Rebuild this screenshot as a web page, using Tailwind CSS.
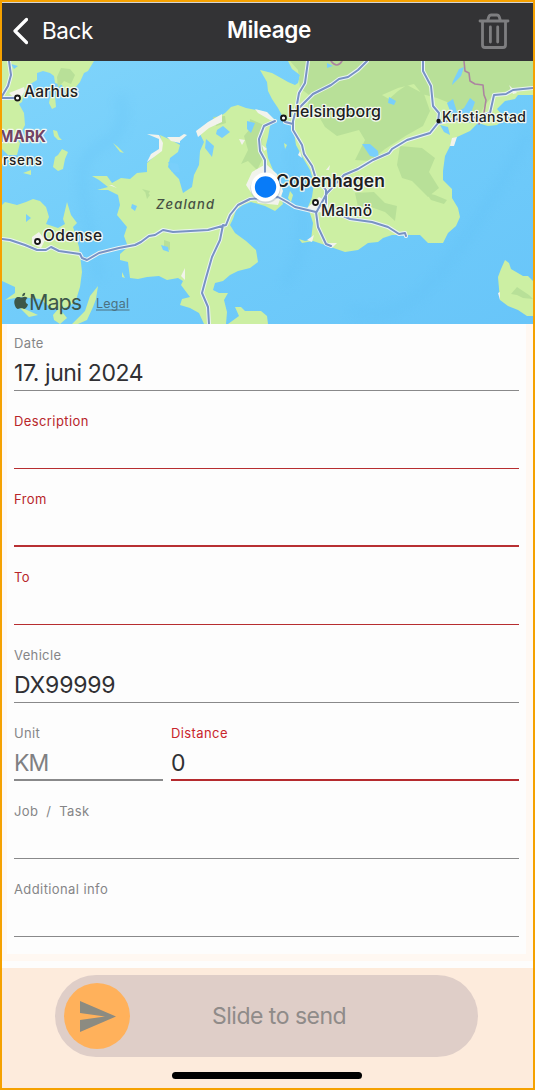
<!DOCTYPE html>
<html lang="da">
<head>
<meta charset="utf-8">
<meta name="viewport" content="width=device-width">
<title>Mileage</title>
<script src="https://cdn.jsdelivr.net/npm/@tailwindcss/browser@4"></script>
</head>
<body class="font-['Inter',sans-serif]">
<main class="flex h-[1090px] w-[535px] flex-col overflow-hidden border-2 border-[#f5a100] bg-[#fdfdfd]">
  <header class="grid h-[59px] shrink-0 grid-cols-3 items-center border-t border-[#d5d5d5] bg-[#333335] pr-[23px] pb-[3px] pl-2.5 text-white">
    <button class="flex items-center gap-3.5 text-left">
      <svg class="h-7 w-4 shrink-0" viewBox="0 0 16 28" fill="none" stroke="currentColor" stroke-width="3.2" stroke-linecap="round" stroke-linejoin="round"><path d="M14.500 2.500 3 14l11.500 11.500"/></svg>
      <span class="text-[22.500px] leading-7 tracking-[-0.4px]">Back</span>
    </button>
    <h1 class="pb-0.5 pl-4 text-center text-[22.500px] leading-7 font-semibold tracking-[-0.35px]">Mileage</h1>
    <svg class="h-9 w-8 justify-self-end text-[#7e7e80]" viewBox="0 0 32 36" fill="none" stroke="currentColor" stroke-width="2.8" stroke-linecap="round" stroke-linejoin="round"><path d="M2 8h28M4.500 8v24q0 2.500 2.500 2.500h18q2.500 0 2.500-2.500V8M9.500 8l1.200-4q.7-2 2.500-2h5.600q1.800 0 2.500 2l1.200 4M12.400 14v15M19.700 14v15"/></svg>
  </header>

  <svg class="h-[263px] w-[531px] shrink-0 font-medium" viewBox="2 61 531 263">
    <defs>
      <linearGradient id="sea" x1="0" y1="0" x2="1" y2="1"><stop offset="0" stop-color="#80d4fb"/><stop offset=".45" stop-color="#72cdfa"/><stop offset="1" stop-color="#68c5f9"/></linearGradient>
      <filter id="soft" x="-20%" y="-20%" width="140%" height="140%"><feGaussianBlur stdDeviation="6"/></filter>
      <path id="roads" d="M9 61 11 75 8 86 2 96M2 98H15M2 239 10 240 25 245 37 250 46 250 51 247 59 251 80 254 82 258 87 260 99 253 119 248 135 245 141 242 149 236 155 235 163 230 173 232 208 230 226 225 230 215 238 205 250 199 278 197 287 202 295 207 316 212 318 227 326 244 331 246M223 225 220 240 212 257 206 278 202 293 208 307 209 324M275 121 264 126 259 139 260 151 265 160 265 178M308 61 305 83 299 93 296 110 293 121 293 130 302 145 304 154 312 166 315 176 326 190 326 204M298 109 313 94 331 85 339 79 348 77 358 70 367 61M285 122 293 124M423 61 423 71 431 86 433 106 439 113 438 123 430 133 407 140 392 149 389 153 373 160 358 169 344 175 327 193 316 213M334 212 350 219 372 222 388 227 399 234 405 233 406 236M438 123 452 120 478 117 490 113 494 95 506 94 513 90 533 88"/>
      <clipPath id="sweden"><path d="M288 61 292 69 300 75 298 83 295 85 288 82 281 78 272 73 260 70 267 82 268 91 272 99 278 108 285 121 293 126 296 145 303 158 310 170 314 183 312 197 308 207 313 223 311 240 305 241 299 239 302 243 313 241 325 245 345 252 358 250 368 243 378 242 383 238 392 235 407 235 420 235 428 243 443 243 448 233 456 226 460 217 458 208 452 198 452 189 443 180 443 171 445 156 450 146 457 137 470 131 478 123 488 126 497 125 505 118 497 109 505 101 515 99 518 95 533 95V61Z"/></clipPath>
    </defs>
    <rect x="2" y="61" width="531" height="263" fill="url(#sea)"/>
    <g fill="none" stroke="#5fbff4" stroke-width="8" opacity=".3" filter="url(#soft)"><path d="M120 95Q130 130 105 143T82 180 90 235 100 280M295 130Q290 170 300 205T285 285M530 130Q500 190 450 260T350 310"/></g>
    <g fill="#ccefa3">
      <path d="M2 61H94L88 71 84 73 80 82 75 88 67 96 62 85 55 83 54 76 50 73 43 71 37 73 37 80 27 86 24 94 22 102 19 104 24 113 25 125 21 133 17 139 20 143 17 155 8 155 2 149Z"/>
      <path d="M50 98 55 96 56 107 52 109 49 103ZM53 130 57 131 59 137 62 140 58 140 54 136ZM62 149 68 152 65 159 63 169 58 171 53 167 55 157 58 155ZM23 173 31 170 31 175ZM113 143 118 147 124 153 120 152Z"/>
      <path d="M2 205 5 202 17 205 26 202 33 199 40 201 46 207 49 217 46 224 58 228 65 224 63 219 67 202 71 215 77 223 73 227 75 233 79 247 81 263 82 272 80 287 76 300 70 306 60 309 51 308 40 299 20 297 5 300 15 293 15 287 2 281Z"/>
      <path d="M98 286 96 299 93 307 87 320 78 324H72L85 311 90 296ZM53 315 59 308 67 318 60 324 54 320ZM122 272 125 278 122 277ZM18 306 38 315 29 317Z"/>
      <path d="M92 176 107 176 112 183 121 178 130 179 137 173 147 172 147 163 160 151 162 143 160 135 173 141 180 145 178 152 170 158 168 167 174 174 179 179 183 193 192 187 194 175 199 165 200 151 204 142 198 130 209 123 225 113 231 107 238 105 246 108 256 110 265 113 275 120 270 126 268 137 266 145 268 158 273 170 278 183 281 195 283 204 275 211 265 206 251 202 243 205 236 210 233 219 230 225 235 233 246 241 256 250 258 262 250 268 238 271 230 275 223 281 215 283 213 290 219 293 228 293 224 300 227 312 226 324H204L199 313 190 308 180 305 182 299 190 297 181 285 183 281 178 278 167 280 159 276 147 277 138 279 130 278 128 262 120 260 120 254 128 247 124 236 127 227 117 215 120 205 118 195 108 190 97 190 108 187 99 180Z"/>
      <path d="M235 307 241 307 245 311 261 311 267 316 268 324H228L239 316ZM284 143 287 145 285 149ZM290 191 293 195 291 202 288 198ZM505 260 509 263 511 269 523 276 528 276 533 281V316H527L518 310 508 306 500 300 498 277 501 269Z"/>
    </g>
    <g clip-path="url(#sweden)">
      <rect x="250" y="61" width="283" height="195" fill="#ccefa3"/>
      <g fill="#b8e098">
        <path d="M290 61 298 70 300 88 309 95 308 108 318 115 325 127 337 136 359 130 365 140 355 160 370 161 385 149 407 135 423 126 430 111 424 94 407 85 398 91 389 99 382 95 398 88 414 84 422 94 437 98 447 102 460 113 478 118 485 105 495 93 533 88V61Z"/>
        <path d="M400 146 422 148 435 158 429 172 439 188 428 197 412 181 402 178 397 165ZM426 193 435 195 447 200 444 204 431 200ZM355 193 374 192 385 203 397 206 395 221 385 212 368 206 358 207Z"/>
      </g>
      <g fill="#79cffb"><path d="M362 144 370 144 378 151 379 158 370 156ZM389 97 396 101 394 105 388 103ZM453 81 459 69 464 67 461 76 452 85ZM447 103 453 99 457 112 464 108 470 98 475 102 471 113 479 118 470 123 462 119 454 121ZM440 125 448 127 450 135 444 132ZM327 63 333 66 327 68Z"/></g>
    </g>
    <g fill="#b8e098"><path d="M61 68 70 69 75 75 71 84 64 81 58 88 57 77ZM250 119 264 125 262 141 263 158 257 170 248 161 241 164 248 150 244 136 249 130ZM213 117 225 116 226 123 216 126ZM145 191 150 195 147 199ZM164 240 170 242 170 250 164 248ZM511 294 517 287 529 295 533 299 523 298 517 295ZM142 189 150 191 148 195Z"/></g>
    <g fill="#79cffb"><path d="M217 130 223 126 230 132 222 138 216 134ZM247 121 255 123 251 133 247 129ZM206 139 214 146 212 157 205 148ZM168 162 178 164 180 172 172 172ZM132 204 137 206 135 211 131 208ZM161 245 168 247 169 252 163 250ZM11 64 18 66 14 69ZM26 214 31 218 26 222Z"/></g>
    <g fill="#f2f3ec">
      <path d="M147 134 159 135 163 143 162 151 154 157 147 162 151 154 159 149 159 139ZM196 131 208 122 222 114 222 122 209 128 198 137ZM178 138 184 134 187 135 179 142ZM255 109 267 112 276 121 270 120 258 113ZM252 172 266 164 277 174 283 191 278 205 258 203 246 185ZM239 139 245 140 242 145ZM9 93 24 87 25 91 18 102 13 97ZM32 237 39 232 45 240 41 248 32 244ZM307 208 319 197 328 202 328 213 318 212ZM450 146 452 138 457 137 454 146ZM307 240 314 235 312 242ZM498 293 500 292 500 300ZM181 276 185 268 185 280ZM262 145 267 149 264 151ZM300 151 302 158 298 155ZM326 170 330 165 329 170ZM112 185 117 188 109 185ZM167 137 180 137 180 143 171 141ZM328 243 337 243 333 247ZM509 85 517 93 513 94Z"/>
    </g>
    <g fill="none" stroke-linejoin="round" stroke-linecap="round">
      <path d="M464 61 465 71 469 73 470 81 475 84 483 85 484 95 486 100 484 113 479 124M331 61Q337 69 342 61" stroke="#ac84a0" stroke-width="1.600"/>
      <use href="#roads" stroke="#eaf4f5" stroke-width="4"/>
      <use href="#roads" stroke="#7892c4" stroke-width="2"/>
    </g>
    <g fill="#fff" stroke="#171717" stroke-width="1.800"><circle cx="17.500" cy="98" r="2.500"/><circle cx="37.500" cy="241.500" r="2.500"/><circle cx="283.500" cy="118" r="2.500"/><circle cx="315.500" cy="202.500" r="2.500"/></g>
    <circle cx="438.500" cy="121" r="2.200" fill="#171717"/>
    <g class="[paint-order:stroke]" fill="#20201f" stroke="#f3f8ef" stroke-width="2.500" stroke-linejoin="round">
      <text x="24" y="96.500" class="text-[15.500px]" textLength="54">Aarhus</text>
      <text x="43" y="240.500" class="text-[15.500px]" textLength="59">Odense</text>
      <text x="288" y="117" class="text-[16px]" textLength="93">Helsingborg</text>
      <text x="442" y="121.500" class="text-[14px]" textLength="84">Kristianstad</text>
      <text x="276" y="186.500" class="text-[17.500px] font-semibold" textLength="109">Copenhagen</text>
      <text x="321" y="216" class="text-[15.500px]" textLength="51">Malmö</text>
      <text x="-6" y="165" class="text-[13.500px]" textLength="48">orsens</text>
      <text x="-1" y="142" class="text-[15.500px] font-bold" fill="#704365" textLength="47">MARK</text>
    </g>
    <text x="156" y="208.500" class="text-[13px] italic" fill="#465144" textLength="58">Zealand</text>
    <circle cx="265.500" cy="188.500" r="15" fill="#53758d" opacity=".22"/>
    <circle cx="265.500" cy="187" r="14.500" fill="#fff"/>
    <circle cx="265.500" cy="187" r="10.700" fill="#087bf8"/>
    <g fill="#3d574a">
      <path d="M22.200 296.300C22 293.700 23.800 292.800 25.200 292.700 25.300 295.100 24 296.300 22.200 296.300ZM21.300 297.500C22.500 297.500 23.200 296.600 25 296.700 26.300 296.800 27.100 297.400 27.600 298.100 24.700 300 25.200 303.300 28 304.500 27.200 306.800 25.800 309 24.300 309 23 309 22.800 308.300 21.200 308.300 19.600 308.300 19.200 309 17.900 309 16.200 309 14.300 305.400 14.300 302.300 14.300 298.900 16.300 296.900 18.400 296.900 19.700 296.900 20.500 297.500 21.300 297.500Z"/>
      <text x="29" y="310" class="text-[21.500px] font-normal" textLength="53">Maps</text>
    </g>
    <text x="96" y="308" class="text-[12.500px] font-normal" fill="#4c7180" textLength="33">Legal</text>
    <path d="M96 310H129.500" stroke="#4c7180"/>
  </svg>

  <section class="h-[637px] shrink-0 bg-[#fff8f2] px-[5px] pb-[7px]">
    <form class="mr-0.5 h-[630px] bg-[#fdfdfd] pr-[7px] pl-[7px] text-[#303033]">
      <div class="h-[67px] border-b-[1.500px] border-[#89898a] pt-2.5"><div class="text-[13px] leading-[18px] tracking-[.35px] text-[#858587]">Date</div><div class="pt-[5px] text-[23px] leading-8 tracking-[-.4px]">17. juni 2024</div></div>
      <div class="h-[78px] border-b border-[#b72d30] pt-[21px] text-[13px] leading-[18px] tracking-[.4px] text-[#b8252a]">Description</div>
      <div class="h-[78px] border-b-2 border-[#b83033] pt-[21px] text-[13px] leading-[18px] tracking-[.4px] text-[#b8252a]">From</div>
      <div class="h-[78px] border-b border-[#b72d30] pt-[21px] text-[13px] leading-[18px] tracking-[.4px] text-[#b8252a]">To</div>
      <div class="h-[78px] border-b border-[#89898a] pt-[21px]"><div class="text-[13px] leading-[18px] tracking-[.35px] text-[#858587]">Vehicle</div><div class="pt-[5px] text-[23px] leading-8 tracking-[-.2px]">DX99999</div></div>
      <div class="flex h-[78px] gap-2">
        <div class="w-[149px] border-b-2 border-[#89898a] pt-[21px]"><div class="text-[13px] leading-[18px] tracking-[.35px] text-[#858587]">Unit</div><div class="pt-[5px] text-[23px] leading-8 tracking-[-.9px] text-[#808082]">KM</div></div>
        <div class="grow border-b-2 border-[#b52a2e] pt-[21px]"><div class="text-[13px] leading-[18px] tracking-[.4px] text-[#c9252b]">Distance</div><div class="pt-[5px] text-[23px] leading-8">0</div></div>
      </div>
      <div class="h-[78px] border-b border-[#89898a] pt-[21px] text-[13px] leading-[18px] tracking-[.35px] whitespace-pre text-[#858587]">Job  /  Task</div>
      <div class="h-[78px] border-b border-[#89898a] pt-[21px] text-[13px] leading-[18px] tracking-[.4px] text-[#858587]">Additional info</div>
    </form>
  </section>

  <footer class="mt-[7px] flex grow flex-col items-center bg-[#fdebdc] pt-[7px]">
    <div class="mr-0.5 flex h-[82px] w-[423px] items-center rounded-full bg-[#dfcec8] pl-[9px]">
      <div class="flex size-[66px] items-center justify-center rounded-full bg-[#ffb15b]">
        <svg class="ml-0.5 h-[31px] w-9" viewBox="0 0 36 31" fill="#8c8b81"><path d="M0 0 36 15.500 0 31V19L25 15.500 0 12Z"/></svg>
      </div>
      <span class="pl-[82px] text-[23px] leading-8 tracking-[-.5px] text-[#8f8b89]">Slide to send</span>
    </div>
    <div class="mt-[15px] mr-0.5 h-[7px] w-[190px] rounded-full bg-black"></div>
  </footer>
</main>
</body>
</html>
